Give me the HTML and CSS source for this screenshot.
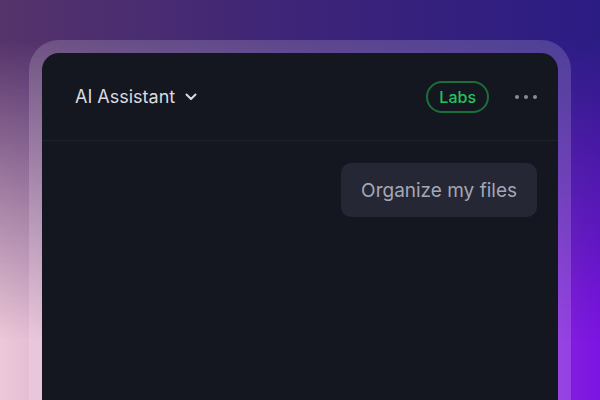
FILE: index.html
```html
<!DOCTYPE html>
<html lang="en">
<head>
  <meta charset="UTF-8" />
  <meta name="viewport" content="width=device-width, initial-scale=1.0" />
  <title>AI Assistant</title>
  <link rel="stylesheet" href="styles.css">
</head>
<body>
  <div class="frame">
    <div class="panel">
      <header class="panel-header">
        <button class="title">
          AI Assistant
          <svg class="chevron" width="12" height="8" viewBox="0 0 12 8">
            <path d="M1.5 1.5 L6 6 L10.5 1.5" fill="none" stroke="currentColor" stroke-width="2" stroke-linecap="round" stroke-linejoin="round"/>
          </svg>
        </button>
        <div class="actions">
          <span class="badge">Labs</span>
          <button class="more">
            <span></span><span></span><span></span>
          </button>
        </div>
      </header>
      <div class="chat">
        <div class="bubble">Organize my files</div>
      </div>
    </div>
  </div>
</body>
</html>
```

FILE: styles.css
```css
* {
  box-sizing: border-box;
  margin: 0;
  padding: 0;
}
html, body {
  height: 100%;
  overflow: hidden;
}
body {
  position: relative;
  font-family: Inter, "Noto Sans", sans-serif;
  background: linear-gradient(to right, #ecc8d8 0%, #b070b8 45%, #7c14e2 100%);
  padding-top: 40px;
}
body::before {
  content: "";
  position: absolute;
  inset: 0;
  background: linear-gradient(to right, #55336a 0%, #3d2478 50%, #2b1c84 100%);
  -webkit-mask-image: linear-gradient(to bottom, black 0%, black 10%, transparent 85%);
  mask-image: linear-gradient(to bottom, black 0%, black 10%, transparent 85%);
}
.frame {
  position: relative;
  margin: 0 29px;
  height: 100%;
  padding: 13px 13px 0;
  border-radius: 30px 30px 0 0;
  background: rgba(255, 255, 255, 0.16);
}
.panel {
  height: 100%;
  background: #14171f;
  border-radius: 17px 17px 0 0;
}
.panel-header {
  height: 88px;
  display: flex;
  align-items: center;
  justify-content: space-between;
  padding: 0 21px 0 33px;
  border-bottom: 1px solid #1f222b;
}
button {
  background: none;
  border: none;
  font: inherit;
  cursor: pointer;
}
.title {
  display: flex;
  align-items: center;
  gap: 10px;
  color: #d9dbe0;
  font-size: 18px;
}
.chevron {
  margin-top: 1px;
}
.actions {
  display: flex;
  align-items: center;
  gap: 26px;
}
.badge {
  height: 32px;
  padding: 0 11px;
  display: flex;
  align-items: center;
  border: 2px solid #1a6f3b;
  border-radius: 16px;
  color: #27c25f;
  font-size: 16px;
  font-weight: 500;
}
.more {
  display: flex;
  gap: 5px;
  padding: 4px 0;
}
.more span {
  width: 4px;
  height: 4px;
  border-radius: 50%;
  background: #8a8d97;
}
.chat {
  display: flex;
  justify-content: flex-end;
  padding: 22px 21px 0;
}
.bubble {
  height: 54px;
  display: flex;
  align-items: center;
  padding: 0 20px;
  background: #252734;
  border-radius: 10px;
  color: #a4a7b4;
  font-size: 19px;
}
```
